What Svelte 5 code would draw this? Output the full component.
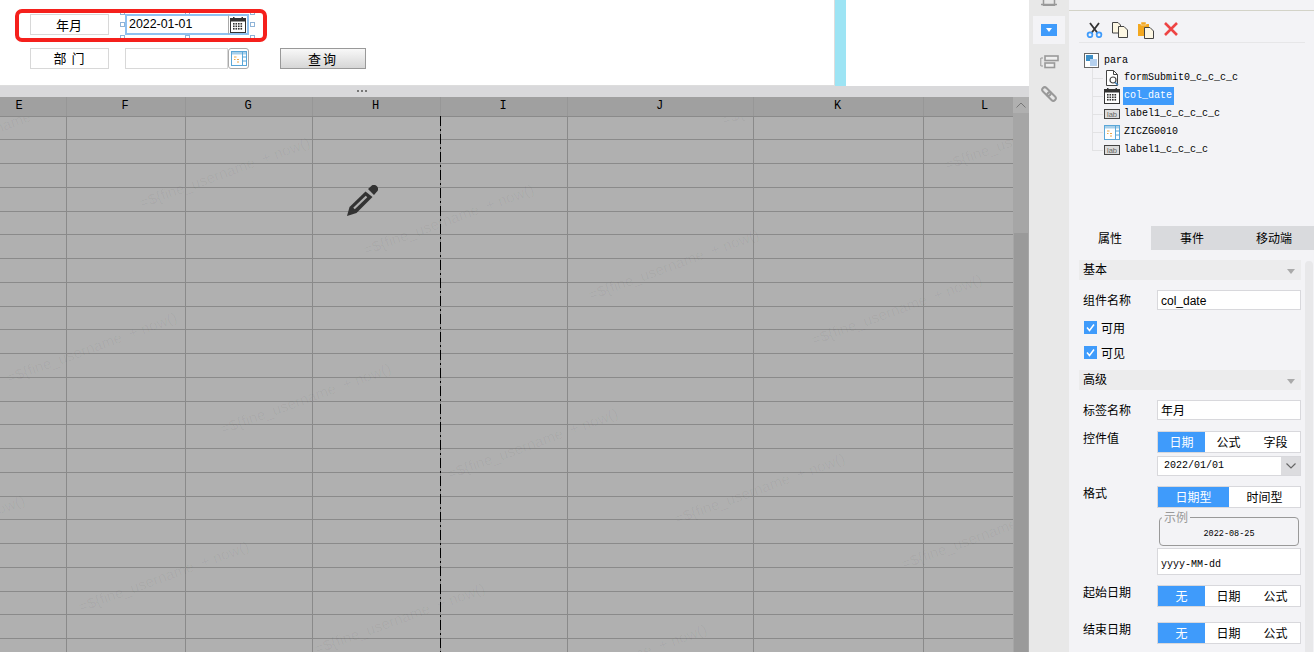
<script>
  const columns = ["E", "F", "G", "H", "I", "J", "K", "L"];
  const rows = Array.from({ length: 23 });

  // watermark start points, page coordinates
  const marks = [
    [-81, 165], [143, 211], [367, 258], [592, 303], [815, 348],
    [725, 128], [948, 173], [10, 386], [224, 437], [451, 482],
    [678, 527], [905, 572], [-142, 569], [82, 615], [318, 657], [540, 698],
  ];

  const tree = [
    { icon: "search", name: "formSubmit0_c_c_c_c" },
    { icon: "calendar", name: "col_date", selected: true },
    { icon: "lab", name: "label1_c_c_c_c_c" },
    { icon: "table", name: "ZICZG0010" },
    { icon: "lab", name: "label1_c_c_c_c" },
  ];

  const handles = [[-5, -4], [60, -4], [125, -4], [-5, 8], [125, 8], [-5, 21], [60, 21], [125, 21]];
</script>

{#snippet calendar()}
  <svg width="16" height="16" viewBox="0 0 16 16">
    <rect x="0.5" y="1.5" width="15" height="14" fill="#fff" stroke="#333" />
    <rect x="1" y="2" width="14" height="2.5" fill="#333" />
    <rect x="3" y="0" width="1.5" height="3" fill="#333" />
    <rect x="11.5" y="0" width="1.5" height="3" fill="#333" />
    {#each [6, 8.5, 11] as y}
      {#each [3, 5.5, 8, 10.5] as x}
        <rect {x} {y} width="1.6" height="1.6" fill="#333" />
      {/each}
    {/each}
  </svg>
{/snippet}

{#snippet tableIcon()}
  <svg width="16" height="15" viewBox="0 0 16 15">
    <rect x="0.5" y="0.5" width="15" height="14" fill="#fff" stroke="#5ba7d8" />
    <rect x="1" y="1" width="14" height="2.5" fill="#a8d0ea" />
    <path d="M11.5 1V14M11.5 6H15.5M11.5 10H15.5" stroke="#5ba7d8" fill="none" />
    <path d="M3 6H5.5M3 8.5H4.5M6 8.5H8M6 11H8" stroke="#eda94a" fill="none" />
  </svg>
{/snippet}

{#snippet labIcon()}
  <svg width="16" height="10" viewBox="0 0 16 10">
    <rect x="0.5" y="0.5" width="15" height="9" fill="#dcdcdc" stroke="#444" />
    <text x="8" y="7.5" text-anchor="middle" font-size="7.5" font-family="Liberation Sans, sans-serif" fill="#666">lab</text>
  </svg>
{/snippet}

{#snippet searchDoc()}
  <svg width="15" height="16" viewBox="0 0 15 16">
    <path d="M1.5 0.5H8.5L12.5 4.5V15.5H1.5Z" fill="#fff" stroke="#444" />
    <path d="M8.5 0.5V4.5H12.5" fill="none" stroke="#444" />
    <circle cx="8" cy="10" r="3" fill="#fff" stroke="#444" stroke-width="1.2" />
    <path d="M10 12.2L13 15.2" stroke="#3f7fb5" stroke-width="1.6" />
  </svg>
{/snippet}

{#snippet tick()}
  <span class="box"><svg width="13" height="13" viewBox="0 0 13 13"><path d="M3 6.5L5.5 9.5L10 3.5" fill="none" stroke="#fff" stroke-width="1.5" /></svg></span>
{/snippet}

<div class="app">
  <div class="main">
    <div class="form">
      <div class="form-left">
        <div class="form-row first">
          <div class="label-box">年月</div>
          <div class="date selected">
            {#each handles as [x, y]}
              <span class="handle" style="left: {x}px; top: {y}px"></span>
            {/each}
            <div class="date-input">2022-01-01</div>
            <div class="date-btn">{@render calendar()}</div>
          </div>
          <div class="red-box"></div>
        </div>
        <div class="form-row">
          <div class="label-box spaced">部 门</div>
          <div class="date">
            <div class="date-input"></div>
            <div class="date-btn">{@render tableIcon()}</div>
          </div>
          <button class="query">查询</button>
        </div>
      </div>
      <div class="strip"></div>
    </div>

    <div class="splitter"><span></span><span></span><span></span></div>

    <div class="sheet">
      <div class="grid">
        <div class="head">
          {#each columns as c}
            <div class="cell">{c}</div>
          {/each}
        </div>
        {#each rows as _}
          <div class="row">
            {#each columns as c}
              <div class="cell"></div>
            {/each}
          </div>
        {/each}

        <div class="marks">
          {#each marks as [x, y]}
            <span class="mark" style="left: {x}px; top: {y - 117 - 16}px">{"=${fine_username  + now()"}</span>
          {/each}
        </div>
        <div class="page-break"></div>
        <svg class="pencil" width="31" height="32" viewBox="0 0 31 32">
          <path d="M0 31L2.5 22L18.5 6.5L25.5 12L9.5 28Z" fill="#333" />
          <path d="M21 4L24 1.2A3.8 3.8 0 0 1 29.8 6.8L27 10Z" fill="#333" />
          <path d="M7 23.5L19.5 11.5" stroke="#b0b0b0" stroke-width="2.2" />
        </svg>
      </div>
      <div class="scrollbar">
        <div class="scroll-up">
          <svg width="10" height="6" viewBox="0 0 10 6"><path d="M0.5 5.5L5 1L9.5 5.5" fill="none" stroke="#777" /></svg>
        </div>
        <div class="scroll-thumb"></div>
      </div>
    </div>
  </div>

  <div class="toolbar">
    <div class="tool top-cut">
      <svg width="16" height="6" viewBox="0 0 16 6"><path d="M2.5 0V5.5H13.5V0M0 4.5H16" fill="none" stroke="#999" stroke-width="1.5" /></svg>
    </div>
    <div class="tool active">
      <div class="blue-rect"><i></i></div>
    </div>
    <div class="tool">
      <svg width="19" height="14" viewBox="0 0 19 14">
        <path d="M3 3H0.8V11H3" fill="none" stroke="#999" />
        <rect x="5" y="1" width="13" height="4.5" fill="#f0f0f0" stroke="#999" stroke-width="1.6" />
        <rect x="5" y="8" width="9.5" height="4.5" fill="#f0f0f0" stroke="#999" stroke-width="1.6" />
      </svg>
    </div>
    <div class="tool">
      <svg width="16" height="16" viewBox="0 0 16 16" fill="none" stroke="#999" stroke-width="2">
        <rect x="0.5" y="3" width="10" height="5" rx="2.5" transform="rotate(45 5.5 5.5)" />
        <rect x="5.5" y="8" width="10" height="5" rx="2.5" transform="rotate(45 10.5 10.5)" />
      </svg>
    </div>
  </div>

  <div class="panel">
    <div class="actions">
      <svg width="17" height="16" viewBox="0 0 17 16">
        <path d="M4 1L11.5 11M13 1L5.5 11" stroke="#333" stroke-width="1.8" fill="none" />
        <circle cx="4" cy="12.8" r="2.4" fill="none" stroke="#3f9bfb" stroke-width="1.8" />
        <circle cx="13" cy="12.8" r="2.4" fill="none" stroke="#3f9bfb" stroke-width="1.8" />
      </svg>
      <svg width="17" height="16" viewBox="0 0 17 16">
        <path d="M0.5 0.5H6L8.5 3V11H0.5Z" fill="#fdf7e3" stroke="#444" />
        <path d="M6.5 4.5H12L15.5 8V15.5H6.5Z" fill="#fdf7e3" stroke="#444" />
      </svg>
      <svg width="17" height="17" viewBox="0 0 17 17">
        <rect x="0" y="2" width="11" height="12" fill="#f3a81f" />
        <rect x="3" y="0" width="5" height="3" fill="#f3a81f" stroke="#f3f3f6" stroke-width="0.5" />
        <path d="M6.5 5.5H12L15.5 9V16.5H6.5Z" fill="#fdf7e3" stroke="#444" />
      </svg>
      <svg width="14" height="14" viewBox="0 0 14 14">
        <path d="M1 1L13 13M13 1L1 13" stroke="#ee4444" stroke-width="2.6" />
      </svg>
    </div>

    <div class="tree">
      <div class="tree-root">
        <svg width="15" height="15" viewBox="0 0 15 15">
          <rect x="0.5" y="0.5" width="14" height="14" fill="#fff" stroke="#666" />
          <rect x="2" y="2" width="7" height="6" fill="#3d8fc7" />
          <rect x="6" y="6" width="7" height="7" fill="#b5d0ee" />
        </svg>
        <span>para</span>
      </div>
      <div class="tree-items">
        {#each tree as item}
          <div class="tree-item">
            <span class="tree-icon">
              {#if item.icon === "search"}{@render searchDoc()}
              {:else if item.icon === "calendar"}{@render calendar()}
              {:else if item.icon === "lab"}{@render labIcon()}
              {:else}{@render tableIcon()}{/if}
            </span>
            <span class="tree-name" class:sel={item.selected}>{item.name}</span>
          </div>
        {/each}
      </div>
    </div>

    <div class="tabs">
      <div class="tab on">属性</div>
      <div class="tab">事件</div>
      <div class="tab">移动端</div>
    </div>

    <div class="props">
      <div class="props-body">
        <div class="section">基本<i></i></div>
        <div class="prop mt10">
          <label for="cname">组件名称</label>
          <div class="input"><span id="cname" class="arial">col_date</span></div>
        </div>
        <div class="check">{@render tick()}可用</div>
        <div class="check">{@render tick()}可见</div>
        <div class="section mt11">高级<i></i></div>
        <div class="prop mt10">
          <label for="lname">标签名称</label>
          <div class="input"><span id="lname">年月</span></div>
        </div>
        <div class="prop mt11">
          <label class="down" for="ctl">控件值</label>
          <div class="stack" id="ctl">
            <div class="seg three"><span class="on">日期</span><span>公式</span><span>字段</span></div>
            <div class="select">
              <span class="mono">2022/01/01</span>
              <b><svg width="10" height="6" viewBox="0 0 10 6"><path d="M0.5 0.5L5 5L9.5 0.5" fill="none" stroke="#666" stroke-width="1.2" /></svg></b>
            </div>
          </div>
        </div>
        <div class="prop mt10">
          <label class="down" for="fmt">格式</label>
          <div class="stack" id="fmt">
            <div class="seg two"><span class="on">日期型</span><span>时间型</span></div>
            <fieldset>
              <legend>示例</legend>
              <span>2022-08-25</span>
            </fieldset>
            <div class="input tall"><span class="mono">yyyy-MM-dd</span></div>
          </div>
        </div>
        <div class="prop mt10">
          <label class="down" for="start">起始日期</label>
          <div class="seg three" id="start"><span class="on">无</span><span>日期</span><span>公式</span></div>
        </div>
        <div class="prop mt15">
          <label class="down" for="end">结束日期</label>
          <div class="seg three" id="end"><span class="on">无</span><span>日期</span><span>公式</span></div>
        </div>
      </div>
      <div class="props-scroll"></div>
    </div>
  </div>
</div>

<style>
  :global(body) {
    overflow: hidden;
  }

  .app {
    display: flex;
    width: 1314px;
    height: 652px;
    overflow: hidden;
    font-family: "Noto Sans CJK SC", "Liberation Sans", sans-serif;
    font-size: 12px;
    color: #000;
    background: #fff;
  }

  .main {
    display: flex;
    flex-direction: column;
    width: 1029px;
  }

  /* ---------- parameter form ---------- */
  .form {
    display: flex;
    height: 86px;
    flex: none;
    background: #fff;
  }

  .form-left {
    width: 835px;
    box-sizing: border-box;
    padding: 14px 0 0 30px;
    border-right: 1px solid #ddd;
    border-bottom: 1px solid #ddd;
  }

  .strip {
    width: 11px;
    background: #9de4f4;
  }

  .form-row {
    position: relative;
    display: flex;
    gap: 16px;
    height: 21px;
    margin-bottom: 13px;
  }

  .label-box {
    width: 79px;
    box-sizing: border-box;
    border: 1px solid #d8d8d8;
    padding-right: 1px;
    line-height: 19px;
    text-align: center;
    font-size: 13px;
  }

  .spaced {
    line-height: 18px;
    white-space: pre;
    word-spacing: 2px;
  }

  .date {
    position: relative;
    display: flex;
    width: 124px;
  }

  .date-input {
    position: relative;
    width: 103px;
    box-sizing: border-box;
    border: 1px solid #d8d8d8;
    padding-left: 4px;
    background: #fff;
    font-family: "Liberation Sans", sans-serif;
    font-size: 12.4px;
    line-height: 17px;
  }

  .date-btn {
    position: relative;
    width: 21px;
    box-sizing: border-box;
    border: 1px solid #aaa;
    border-radius: 3px;
    display: flex;
    align-items: center;
    justify-content: center;
    background: #fff;
  }

  .selected .date-input {
    border: 2px solid #8fc1f0;
    border-right: 0;
    padding-left: 2px;
  }

  .selected .date-btn {
    border: 2px solid #8fc1f0;
    border-left: 1px solid #aaa;
    border-radius: 0;
  }

  .handle {
    position: absolute;
    width: 5px;
    height: 5px;
    box-sizing: border-box;
    border: 1px solid #8fb4d8;
    background: #fff;
  }

  .red-box {
    position: absolute;
    left: -15px;
    top: -5px;
    width: 252px;
    height: 33px;
    box-sizing: border-box;
    border: 4px solid #f5201c;
    border-radius: 7px;
  }

  .query {
    width: 86px;
    height: 21px;
    margin-left: 15px;
    padding: 0 0 4px;
    border: 1px solid #999;
    background: linear-gradient(#f8f8f8, #d6d6d6);
    font: inherit;
    font-size: 13px;
    letter-spacing: 2px;
  }

  .splitter {
    height: 11px;
    flex: none;
    box-sizing: border-box;
    padding: 4px 0 0 357px;
    display: flex;
    gap: 2px;
    background: #d9d9db;
  }

  .splitter span {
    width: 2px;
    height: 2px;
    background: #777;
  }

  /* ---------- sheet ---------- */
  .sheet {
    display: flex;
    flex: 1;
    min-height: 0;
    overflow: hidden;
  }

  .grid {
    position: relative;
    width: 1013px;
    overflow: hidden;
    background: #b0b0b0;
  }

  .head,
  .row {
    display: flex;
    margin-left: -26px;
  }

  .head {
    height: 20px;
    box-sizing: border-box;
    border-bottom: 1px solid #8a8a8a;
    background: #a0a0a0;
  }

  .head .cell {
    border-right-color: #979797;
    padding-right: 2px;
    text-align: center;
    font-family: "Liberation Mono", monospace;
    font-size: 12px;
    line-height: 19px;
  }

  .row {
    height: 24px;
    box-sizing: border-box;
    border-bottom: 1px solid #8a8a8a;
  }

  .row:nth-child(4n + 2) {
    height: 23px;
  }

  .cell {
    flex: none;
    box-sizing: border-box;
    border-right: 1px solid #8a8a8a;
  }

  .cell:nth-child(1) { width: 93px; }
  .cell:nth-child(2) { width: 119px; }
  .cell:nth-child(3) { width: 127px; }
  .cell:nth-child(4) { width: 128px; }
  .cell:nth-child(5) { width: 127px; }
  .cell:nth-child(6) { width: 186px; }
  .cell:nth-child(7) { width: 170px; }
  .cell:nth-child(8) { width: 124px; }

  .marks {
    position: absolute;
    left: 0;
    top: 20px;
    right: 0;
    bottom: 0;
    overflow: hidden;
  }

  .mark {
    position: absolute;
    transform: rotate(-20deg);
    transform-origin: left bottom;
    font-family: "Liberation Sans", sans-serif;
    font-size: 15px;
    line-height: 16px;
    white-space: pre;
    color: rgba(0, 0, 0, 0.04);
  }

  .page-break {
    position: absolute;
    left: 440px;
    top: 19px;
    bottom: 0;
    width: 1px;
    background: repeating-linear-gradient(#000 0 10px, #8a8a8a 10px 13px, #000 13px 15px, #8a8a8a 15px 18px);
  }

  .pencil {
    position: absolute;
    left: 347px;
    top: 88px;
  }

  .scrollbar {
    width: 16px;
    display: flex;
    flex-direction: column;
    background: #a6a6a6;
  }

  .scroll-up {
    height: 16px;
    display: flex;
    align-items: center;
    justify-content: center;
    background: #b0b0b0;
  }

  .scroll-thumb {
    margin: 120px 1px 0 1px;
    flex: 1;
    background: #9a9a9a;
  }

  /* ---------- side toolbar ---------- */
  .toolbar {
    width: 40px;
    flex: none;
    display: flex;
    flex-direction: column;
    align-items: center;
    background: #e8e8e8;
  }

  .tool {
    width: 32px;
    height: 28px;
    display: flex;
    align-items: center;
    justify-content: center;
    margin-bottom: 4px;
  }

  .top-cut {
    height: 6px;
    margin-bottom: 10px;
  }

  .active {
    background: #f3f3f6;
  }

  .blue-rect {
    width: 16px;
    height: 12px;
    display: flex;
    align-items: center;
    justify-content: center;
    background: #3f9bfb;
  }

  .blue-rect i {
    border-top: 4px solid #fff;
    border-left: 3px solid transparent;
    border-right: 3px solid transparent;
  }

  /* ---------- right panel ---------- */
  .panel {
    width: 245px;
    flex: none;
    background: #f3f3f6;
  }

  .actions {
    position: relative;
    margin-top: 10px;
    height: 33px;
    padding: 11px 0 0 17px;
    box-sizing: border-box;
    display: flex;
    gap: 9px;
    align-items: flex-start;
    border-top: 1px solid #d3d3c8;
  }

  .actions::after {
    content: "";
    position: absolute;
    left: 10px;
    right: 9px;
    bottom: 0;
    height: 1px;
    background: #e6e6e8;
  }

  .tree {
    padding: 10px 0 0 15px;
    height: 183px;
    box-sizing: border-box;
    font-family: "Liberation Mono", monospace;
    font-size: 10px;
  }

  .tree-root {
    display: flex;
    align-items: center;
    gap: 5px;
    height: 15px;
  }

  .tree-items {
    margin-left: 8px;
    padding-top: 1px;
    border-left: 1px solid #e2e2e4;
    height: 82px;
  }

  .tree-item {
    display: flex;
    align-items: center;
    height: 18px;
    position: relative;
    padding-left: 11px;
  }

  .tree-item::before {
    content: "";
    position: absolute;
    left: 0;
    top: 9px;
    width: 10px;
    height: 1px;
    background: #e2e2e4;
  }

  .tree-icon {
    width: 16px;
    display: flex;
    justify-content: center;
    margin-right: 3px;
  }

  .tree-name {
    line-height: 18px;
    padding: 0 1px;
  }

  .sel {
    background: #3f9bfb;
    color: #fff;
    padding: 0 2px 0 1px;
  }

  .tabs {
    display: flex;
    height: 24px;
  }

  .tab {
    width: 82px;
    flex: none;
    text-align: center;
    line-height: 24px;
    background: #d9dadd;
  }

  .tab.on {
    background: #f3f3f6;
  }

  .props {
    display: flex;
    height: 402px;
    padding-left: 10px;
  }

  .props-body {
    width: 222px;
    padding-top: 10px;
  }

  .props-scroll {
    width: 8px;
    margin: 11px 0 0 4px;
    border-radius: 4px 4px 0 0;
    background: #e8e8ea;
  }

  .section {
    position: relative;
    height: 20px;
    line-height: 18px;
    padding-left: 4px;
    background: #ececed;
  }

  .section i {
    position: absolute;
    right: 6px;
    top: 9px;
    border-top: 5px solid #aaa;
    border-left: 4px solid transparent;
    border-right: 4px solid transparent;
  }

  .mt10 { margin-top: 10px; }
  .mt11 { margin-top: 11px; }
  .mt15 { margin-top: 15px; }

  .prop {
    display: grid;
    grid-template-columns: 78px 144px;
  }

  .prop label {
    padding-left: 4px;
    line-height: 20px;
  }

  .prop label.down {
    line-height: 14px;
  }

  .input {
    height: 20px;
    box-sizing: border-box;
    border: 1px solid #d8d8dc;
    background: #fff;
    padding-left: 3px;
    line-height: 18px;
  }

  .arial {
    font-family: "Liberation Sans", sans-serif;
  }

  .mono {
    font-family: "Liberation Mono", monospace;
    font-size: 10px;
  }

  .check {
    display: flex;
    align-items: center;
    gap: 4px;
    height: 14px;
    margin-top: 10px;
    padding-left: 5px;
  }

  .check + .check {
    margin-top: 11px;
  }

  .box {
    width: 13px;
    height: 13px;
    background: #3f9bfb;
    display: flex;
  }

  .stack {
    display: flex;
    flex-direction: column;
  }

  .seg {
    display: grid;
    height: 22px;
    box-sizing: border-box;
    border: 1px solid #d8d8dc;
    background: #fff;
    line-height: 19px;
    text-align: center;
  }

  .seg .on {
    background: #3f9bfb;
    color: #fff;
  }

  .three {
    grid-template-columns: 47px 47px 47px;
  }

  .two {
    grid-template-columns: 71px 71px;
  }

  .select {
    display: flex;
    justify-content: space-between;
    align-items: stretch;
    height: 20px;
    margin-top: 3px;
    box-sizing: border-box;
    border: 1px solid #d8d8dc;
    background: #fff;
    padding-left: 6px;
    line-height: 18px;
  }

  .select b {
    width: 19px;
    display: flex;
    align-items: center;
    justify-content: center;
    background: #dcdcdf;
  }

  fieldset {
    height: 36px;
    width: 140px;
    box-sizing: border-box;
    margin: 2px 0 0 2px;
    padding: 0;
    border: 1px solid #999;
    border-radius: 4px;
    text-align: center;
    font-family: "Liberation Mono", monospace;
    font-size: 8.5px;
    line-height: 20px;
  }

  legend {
    margin-left: 2px;
    padding: 0 2px;
    text-align: left;
    font-family: "Noto Sans CJK SC", sans-serif;
    font-size: 12px;
    line-height: 14px;
    color: #999;
  }

  .tall {
    height: 27px;
    margin-top: 2px;
    line-height: 25px;
  }
</style>
